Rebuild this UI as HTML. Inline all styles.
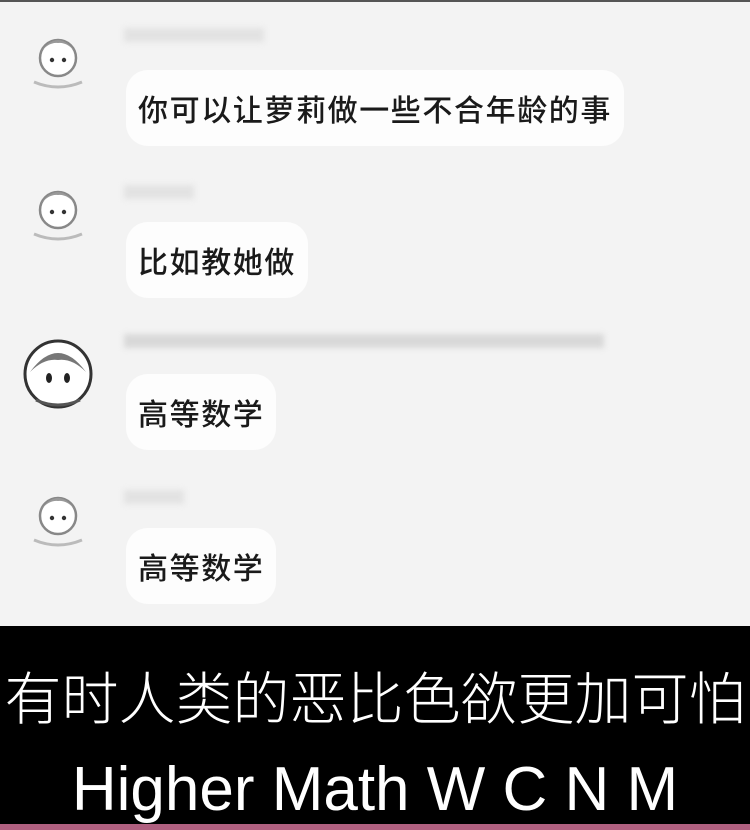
<!DOCTYPE html>
<html><head><meta charset="utf-8"><style>
html,body{margin:0;padding:0;}
body{width:750px;height:830px;background:#f3f3f3;position:relative;overflow:hidden;font-family:"Liberation Sans","Noto Sans CJK SC",sans-serif;}
.topbar{position:absolute;left:0;top:0;width:750px;height:2px;background:#555;}
.bub{position:absolute;left:126px;background:#fdfdfd;border-radius:22px;color:#1a1a1a;font-size:30px;letter-spacing:1.6px;line-height:76px;padding:0 12px;font-family:"Noto Sans CJK SC",sans-serif;font-weight:500;white-space:nowrap;}
.name{position:absolute;left:124px;height:14px;background:#e2e2e2;filter:blur(3px);}
.av{position:absolute;left:28px;width:60px;height:64px;}
.cap{position:absolute;left:0;top:626px;width:750px;height:200px;background:#000;}
.c1{position:absolute;left:0;top:655px;width:750px;text-align:center;color:#fff;font-size:57px;letter-spacing:0;line-height:80px;font-weight:300;font-family:"Noto Sans CJK SC",sans-serif;white-space:nowrap;}
.c2{position:absolute;left:0;top:755px;width:750px;text-align:center;color:#fff;font-size:62px;line-height:70px;font-family:"Liberation Sans",sans-serif;white-space:nowrap;}
.pink{position:absolute;left:0;top:824px;width:750px;height:6px;background:#b06080;}
</style></head><body>
<div class="topbar"></div>

<svg class="av" style="top:28px" viewBox="0 0 60 64"><circle cx="30" cy="30" r="18" fill="#fff" stroke="#888" stroke-width="2.5"/><path d="M11 26 Q30 -2 49 26 Q40 14 30 15 Q20 14 11 26Z" fill="#999"/><circle cx="24" cy="32" r="2.2" fill="#333"/><circle cx="36" cy="32" r="2.2" fill="#333"/><path d="M6 54 Q30 64 54 54" stroke="#bbb" stroke-width="3" fill="none"/></svg>
<div class="name" style="top:28px;width:140px;"></div>
<div class="bub" style="top:70px;">你可以让萝莉做一些不合年龄的事</div>

<svg class="av" style="top:180px" viewBox="0 0 60 64"><circle cx="30" cy="30" r="18" fill="#fff" stroke="#888" stroke-width="2.5"/><path d="M11 26 Q30 -2 49 26 Q40 14 30 15 Q20 14 11 26Z" fill="#999"/><circle cx="24" cy="32" r="2.2" fill="#333"/><circle cx="36" cy="32" r="2.2" fill="#333"/><path d="M6 54 Q30 64 54 54" stroke="#bbb" stroke-width="3" fill="none"/></svg>
<div class="name" style="top:185px;width:70px;"></div>
<div class="bub" style="top:222px;">比如教她做</div>

<svg class="av" style="top:338px;left:22px;width:72px;height:72px" viewBox="0 0 72 72"><circle cx="36" cy="36" r="33" fill="#fff" stroke="#333" stroke-width="3"/><path d="M8 34 Q36 -4 64 34 Q50 20 36 22 Q22 20 8 34Z" fill="#777"/><ellipse cx="27" cy="40" rx="3" ry="5" fill="#222"/><ellipse cx="45" cy="40" rx="3" ry="5" fill="#222"/><path d="M14 62 Q36 72 58 62" stroke="#555" stroke-width="3" fill="none"/></svg>
<div class="name" style="top:334px;width:480px;background:#d8d8d8;"></div>
<div class="bub" style="top:374px;">高等数学</div>

<svg class="av" style="top:486px" viewBox="0 0 60 64"><circle cx="30" cy="30" r="18" fill="#fff" stroke="#888" stroke-width="2.5"/><path d="M11 26 Q30 -2 49 26 Q40 14 30 15 Q20 14 11 26Z" fill="#999"/><circle cx="24" cy="32" r="2.2" fill="#333"/><circle cx="36" cy="32" r="2.2" fill="#333"/><path d="M6 54 Q30 64 54 54" stroke="#bbb" stroke-width="3" fill="none"/></svg>
<div class="name" style="top:490px;width:60px;"></div>
<div class="bub" style="top:528px;">高等数学</div>

<div class="cap"></div>
<div class="c1">有时人类的恶比色欲更加可怕</div>
<div class="c2">Higher Math W C N M</div>
<div class="pink"></div>
</body></html>
